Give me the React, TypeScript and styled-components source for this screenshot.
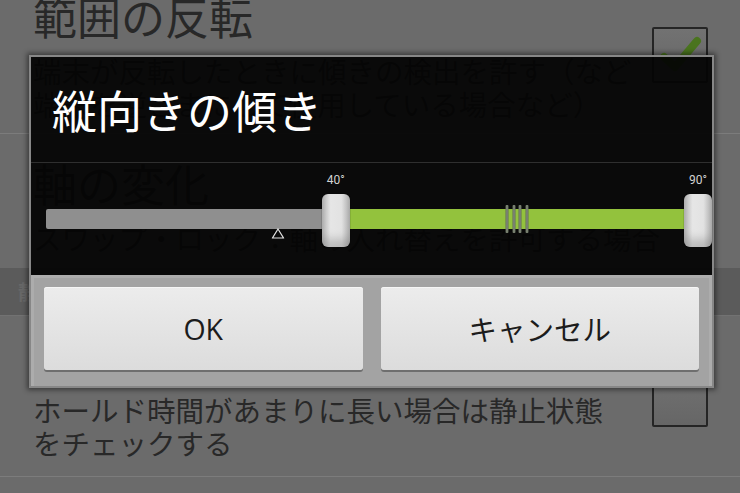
import React from "react";
import styled, { createGlobalStyle } from "styled-components";

const GlobalStyle = createGlobalStyle`
  html, body {
    margin: 0;
    padding: 0;
    background: #6b6b6b;
    overflow: hidden;
  }
  * { box-sizing: border-box; }
`;

const JP = `"Noto Sans CJK JP", "Noto Sans", sans-serif`;
const LATIN = `"Open Sans", "Noto Sans CJK JP", sans-serif`;

const Page = styled.div`
  position: relative;
  width: 740px;
  height: 493px;
  overflow: hidden;
  background: #6b6b6b;
  font-family: ${JP};
`;

const PrefList = styled.div`
  display: flex;
  flex-direction: column;
`;

const PrefRow = styled.div<{ $h: number }>`
  display: grid;
  grid-template-columns: 1fr auto;
  align-items: start;
  height: ${(p) => p.$h}px;
  padding: 0 32px 0 33px;
  flex-shrink: 0;
`;

const PrefText = styled.div<{ $top: number }>`
  display: flex;
  flex-direction: column;
  margin-top: ${(p) => p.$top}px;
`;

const PrefTitle = styled.div`
  font-size: 44px;
  line-height: 44px;
  color: #282828;
  white-space: nowrap;
`;

const PrefSummary = styled.div`
  margin-top: 16px;
  font-size: 28.5px;
  line-height: 33px;
  color: #282828;
  white-space: nowrap;
`;

const Separator = styled.div`
  height: 1px;
  background: #7c7c7c;
  flex-shrink: 0;
`;

const CategoryBar = styled.div`
  height: 48px;
  background: #5b5b5b;
  border-bottom: 1px solid #727272;
  display: flex;
  align-items: center;
  padding-left: 18px;
  font-size: 20px;
  font-weight: bold;
  color: #686868;
  flex-shrink: 0;
`;

const CheckBox = styled.div<{ $top: number }>`
  width: 56px;
  height: 56px;
  margin-top: ${(p) => p.$top}px;
  border: 2px solid #252525;
  border-radius: 2px;
  background: linear-gradient(#727272, #666666);
  display: flex;
  align-items: center;
  justify-content: center;
`;

const Dialog = styled.div`
  position: absolute;
  left: 29px;
  top: 55px;
  width: 685px;
  height: 333px;
  border: 2px solid #878787;
  box-shadow: 0 0 5px 2px rgba(0, 0, 0, 0.45);
  display: flex;
  flex-direction: column;
`;

const DialogBody = styled.div`
  height: 218px;
  background: rgba(4, 4, 4, 0.94);
  display: flex;
  flex-direction: column;
`;

const DialogTitle = styled.div`
  height: 106px;
  display: flex;
  align-items: center;
  padding-left: 21px;
  font-size: 45px;
  color: #ffffff;
  border-bottom: 1px solid #2f2f2f;
`;

const SliderArea = styled.div`
  flex: 1;
  padding-left: 15px;
`;

const Slider = styled.div`
  position: relative;
  width: 652px;
  height: 100%;
`;

const Track = styled.div`
  position: absolute;
  left: 0;
  right: 0;
  top: 46px;
  height: 20px;
  border-radius: 2px;
  background: #8f8f8f;
`;

const TrackFill = styled.div`
  position: absolute;
  top: 0;
  bottom: 0;
  background: #93c23d;
`;

const Grip = styled.div`
  position: absolute;
  top: 42px;
  width: 23px;
  height: 28px;
  display: flex;
  justify-content: space-between;
  transform: translateX(-50%);
`;

const GripLine = styled.div`
  width: 3px;
  height: 100%;
  border-radius: 1px;
  background: linear-gradient(90deg, #5f6a58, #858b7c, #5f6a58);
`;

const Thumb = styled.div`
  position: absolute;
  top: 31px;
  width: 28px;
  height: 53px;
  border-radius: 6px;
  transform: translateX(-50%);
  background: linear-gradient(90deg, #bdbdbd 0%, #e6e6e6 30%, #e2e2e2 70%, #b8b8b8 100%);
  box-shadow: inset 0 -8px 10px rgba(0, 0, 0, 0.18), 0 0 1px #000;
`;

const ThumbLabel = styled.div`
  position: absolute;
  top: 11px;
  transform: translateX(-50%);
  font-family: "Roboto", "DejaVu Sans", sans-serif;
  font-size: 12px;
  line-height: 12px;
  color: #d2d2d2;
  white-space: nowrap;
`;

const Marker = styled.svg`
  position: absolute;
  top: 65px;
  transform: translateX(-50%);
`;

const ButtonBar = styled.div`
  flex: 1;
  background: #a3a3a3;
  box-shadow: inset 0 3px 0 #adadad, inset 3px 0 0 #acacac, inset -3px 0 0 #acacac;
  display: grid;
  grid-template-columns: 1fr 1fr;
  column-gap: 18px;
  padding: 12px 13px 16px;
`;

const DialogButton = styled.div`
  height: 83px;
  border-radius: 3px;
  background: linear-gradient(#ececec, #dcdcdc);
  box-shadow: 0 2px 0 #6e6e6e, inset 0 1px 0 #f6f6f6;
  display: flex;
  align-items: center;
  justify-content: center;
  font-family: ${LATIN};
  font-size: 28.5px;
  color: #1c1c1c;
`;

const MIN = 0;
const MAX = 90;
const WIDTH = 652;
const pos = (v: number) => ((v - MIN) / (MAX - MIN)) * WIDTH;

export default function App() {
  const low = 40;
  const high = 90;
  const current = 32;
  return (
    <Page>
      <GlobalStyle />
      <PrefList>
        <PrefRow $h={133}>
          <PrefText $top={-6}>
            <PrefTitle>範囲の反転</PrefTitle>
            <PrefSummary>
              端末が反転したときに傾きの検出を許す（など
              <br />
              端末を逆さまにして使用している場合など）
            </PrefSummary>
          </PrefText>
          <CheckBox $top={27}>
            <svg width="44" height="40" viewBox="0 0 44 40">
              <path d="M6 22 L17 32 L39 6" fill="none" stroke="#4a741e" strokeWidth="8" strokeLinecap="round" strokeLinejoin="round" />
            </svg>
          </CheckBox>
        </PrefRow>
        <Separator />
        <PrefRow $h={134}>
          <PrefText $top={27}>
            <PrefTitle>軸の変化</PrefTitle>
            <PrefSummary>スワップ・ロック：軸の入れ替えを許可する場合</PrefSummary>
          </PrefText>
        </PrefRow>
        <CategoryBar>静止状態の検出</CategoryBar>
        <PrefRow $h={160}>
          <PrefText $top={17}>
            <PrefTitle>静止状態の確認</PrefTitle>
            <PrefSummary>
              ホールド時間があまりに長い場合は静止状態
              <br />
              をチェックする
            </PrefSummary>
          </PrefText>
          <CheckBox $top={55} />
        </PrefRow>
        <Separator />
      </PrefList>

      <Dialog>
        <DialogBody>
          <DialogTitle>縦向きの傾き</DialogTitle>
          <SliderArea>
            <Slider>
              <Track>
                <TrackFill style={{ left: pos(low), width: pos(high) - pos(low) }} />
              </Track>
              <Grip style={{ left: (pos(low) + pos(high)) / 2 }}>
                <GripLine />
                <GripLine />
                <GripLine />
                <GripLine />
              </Grip>
              <Marker width="13" height="11" viewBox="0 0 13 11" style={{ left: pos(current) }}>
                <path d="M6.5 1 L12 10 L1 10 Z" fill="none" stroke="#e0e0e0" strokeWidth="1.2" />
              </Marker>
              <ThumbLabel style={{ left: pos(low) }}>{low}°</ThumbLabel>
              <ThumbLabel style={{ left: pos(high) }}>{high}°</ThumbLabel>
              <Thumb style={{ left: pos(low) }} />
              <Thumb style={{ left: pos(high) }} />
            </Slider>
          </SliderArea>
        </DialogBody>
        <ButtonBar>
          <DialogButton>OK</DialogButton>
          <DialogButton>キャンセル</DialogButton>
        </ButtonBar>
      </Dialog>
    </Page>
  );
}
